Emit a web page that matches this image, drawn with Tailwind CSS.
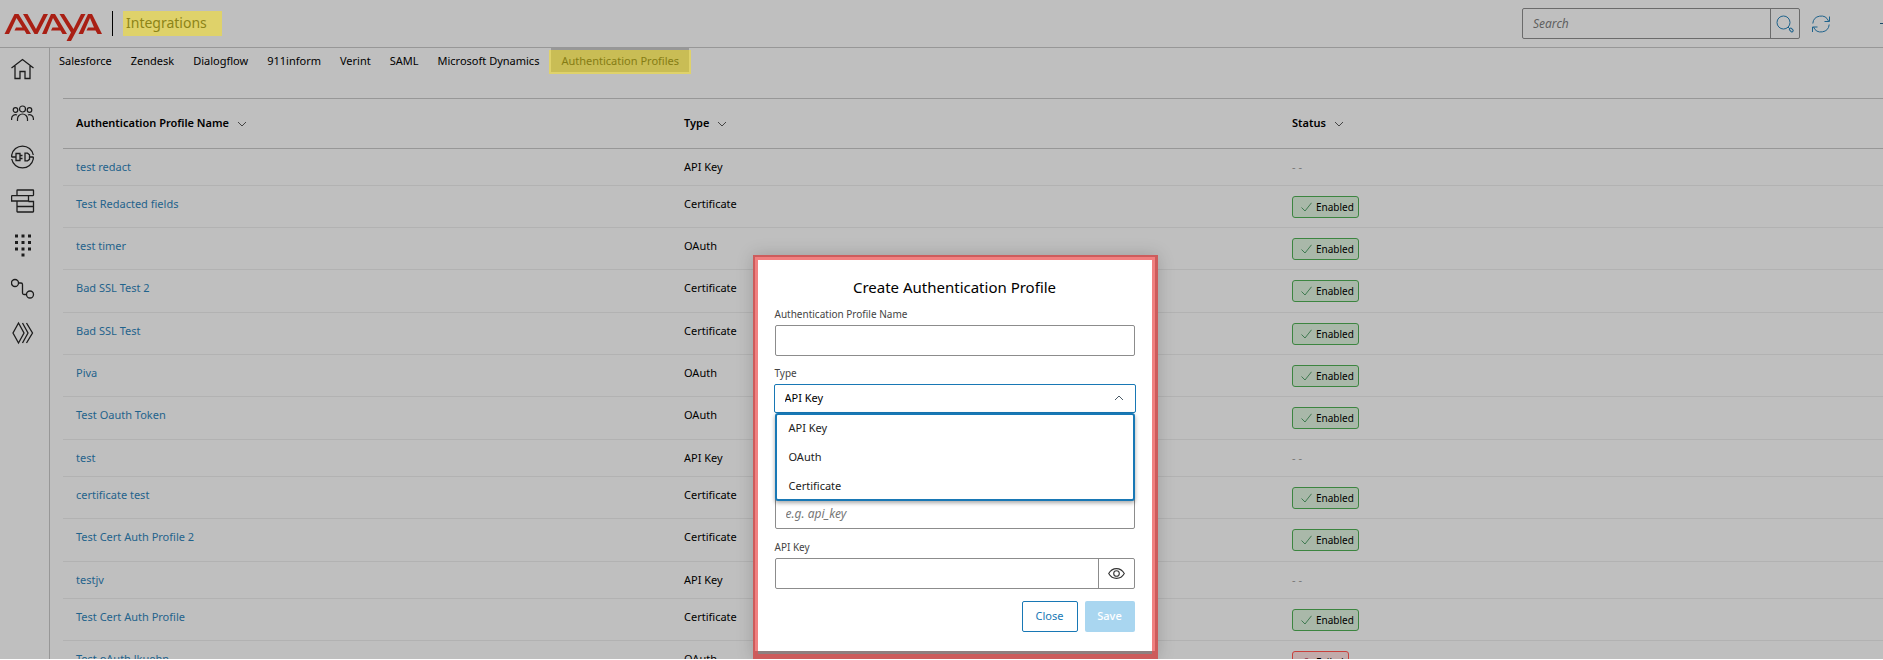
<!DOCTYPE html>
<html lang="en">
<head>
<meta charset="utf-8">
<title>Integrations</title>
<script src="https://cdn.jsdelivr.net/npm/@tailwindcss/browser@4"></script>
</head>
<body class="h-screen overflow-hidden border-b border-white bg-white font-['Noto_Sans',sans-serif] text-[11px] text-black">
<svg class="hidden">
  <symbol id="chev" viewBox="0 0 10 6"><path d="M1 1l4 4 4-4" fill="none" stroke="currentColor"/></symbol>
  <symbol id="check" viewBox="0 0 11 10"><path d="M.5 5.5L4 9 10.500 .8" fill="none" stroke="currentColor"/></symbol>
</svg>
<div class="relative flex h-full flex-col overflow-hidden bg-[#bfbfbf]">
  <header class="flex h-12 shrink-0 items-center border-b border-[#979797] pl-1">
    <svg class="h-9 w-[98px] shrink-0" viewBox="0 0 98 36" fill="#a91f14" aria-label="Avaya">
      <path d="M.5 28L10.500 8h4L27 28h-4.500l-2-3.500H10.500l1.500-3h6.500L12.500 12 5 28z"/>
      <path d="M19 8h4.500l8.500 15 7.500-15H44L33.500 28h-3z"/>
      <path d="M38 28L47 8h4L63 28h-4.500l-2-3.500H47l1.500-3h6L49 12l-6.500 16z"/>
      <path d="M55.500 8H60l9.500 15L77 8h4.500L67 35h-4.500l4.500-8.500z"/>
      <path d="M74.500 28L84 8h4l10 20h-4.500l-2-3.500H82.500l1.500-3h6L86 12l-7 16z"/>
    </svg>
    <div class="ml-[10px] h-[25px] w-px bg-black"></div>
    <h1 class="ml-[10px] h-[25px] w-[99px] bg-[#dfd26a] pl-[3px] text-[14px] leading-6 text-[#8d8417]">Integrations</h1>
    <form class="mr-3 ml-auto flex h-[31px] w-[278px] rounded-xs border border-[#6b6b6b]">
      <input type="text" aria-label="Search" placeholder="Search" class="min-w-0 flex-1 pl-[10px] text-xs placeholder:text-[#5f5f5f] placeholder:italic">
      <button type="button" aria-label="Submit search" class="flex w-[29px] items-center justify-center border-l border-[#6b6b6b] text-[#1f638c]">
        <svg class="size-[18px]" viewBox="0 0 18 18" fill="none" stroke="currentColor"><circle cx="7.500" cy="7.500" r="6.500"/><path d="M12 12l2 2"/><rect x="13.300" y="13.800" width="4" height="2.400" rx="1" transform="rotate(45 15.300 15)"/></svg>
      </button>
    </form>
    <button type="button" aria-label="Refresh" class="text-[#1f638c]">
      <svg class="size-[18px]" viewBox="0 0 18 18" fill="none" stroke="currentColor"><path d="M.8 8.500A8.200 8.200 0 0 1 16.500 6M17.200 9.500A8.200 8.200 0 0 1 1.500 12M17.500 1.500v5h-5M.5 17v-5h5"/></svg>
    </button>
    <div class="ml-[50px] h-px w-[3px] bg-[#1a4a68]"></div>
  </header>
  <div class="flex min-h-0 flex-1">
    <nav aria-label="Main" class="flex w-[50px] shrink-0 flex-col gap-5 border-r border-[#979797] pt-[9px] pl-[11px] text-[#1c1c1c]">
      <a href="#" aria-label="Home"><svg class="size-6" viewBox="0 0 24 24" fill="none" stroke="currentColor" stroke-width="1.300"><path d="M.5 11L11.500 2.500 22.500 11M4 9v12.500h5V14.500h5v7h5V9"/></svg></a>
      <a href="#" aria-label="Users"><svg class="size-6" viewBox="0 0 24 24" fill="none" stroke="currentColor" stroke-width="1.200"><circle cx="11.500" cy="8" r="3"/><circle cx="4.500" cy="9" r="2.300"/><circle cx="18.500" cy="9" r="2.300"/><path d="M6.500 20v-2a5 5 0 0 1 10 0v2M.6 19v-1.500a4 4 0 0 1 5.500-3.500M22.400 19v-1.500a4 4 0 0 0-5.500-3.500"/></svg></a>
      <a href="#" aria-label="Integrations"><svg class="size-6" viewBox="0 0 24 24" fill="none" stroke="currentColor" stroke-width="1.300"><path d="M.7 10a11 11 0 0 1 21.600 0M.7 14a11 11 0 0 0 21.600 0M.5 12H5M18 12h4.500M.7 10v2M22.300 12v2M5 8.500h4v7H5zM9 10.500h2.500M9 13.500h2.500M14 8.200v7.600h2.500l2-1.500v-4.600l-2-1.500z"/></svg></a>
      <a href="#" aria-label="Queues"><svg class="size-6" viewBox="0 0 24 24" fill="none" stroke="currentColor" stroke-width="1.300"><path d="M6 6.500v-5q0-.5.500-.5h15.500q.5 0 .5.500v4.500q0 .5-.5.500M.6 6.600h21.400M.6 6.600v5.400h16.900V6.600M6 12v10.500q0 .5.500.5h15.500q.5 0 .5-.5V12.500h-5M6 17.500h16.500"/></svg></a>
      <a href="#" aria-label="Dialpad"><svg class="size-6" viewBox="0 0 24 24" fill="currentColor"><path d="M4 1.500h3v3H4zM10.500 1.500h3v3h-3zM17 1.500h3v3h-3zM4 8h3v3H4zM10.500 8h3v3h-3zM17 8h3v3h-3zM4 14.500h3v3H4zM10.500 14.500h3v3h-3zM17 14.500h3v3h-3zM10.500 20.500h3v3h-3z"/></svg></a>
      <a href="#" aria-label="Routing"><svg class="size-6" viewBox="0 0 24 24" fill="none" stroke="currentColor" stroke-width="1.300"><circle cx="4" cy="6" r="3.500"/><circle cx="19" cy="17.500" r="3.500"/><path d="M7.500 6h2.500q1.500 0 1.500 1.500v8.500q0 1.500 1.500 1.500h2.500"/></svg></a>
      <a href="#" aria-label="Flows"><svg class="size-6" viewBox="0 0 24 24" fill="none" stroke="currentColor" stroke-width="1.300"><path d="M7.500 2L2 12l5.500 10L13 12zM11.500 2L17 12l-5.500 10M15.500 2l6 10-6 10"/></svg></a>
    </nav>
    <main class="min-w-0 flex-1">
      <nav aria-label="Integrations" class="flex h-[50px] items-start gap-px leading-[26px]">
        <a href="#" class="px-[9px]">Salesforce</a><a href="#" class="px-[9px]">Zendesk</a><a href="#" class="px-[9px]">Dialogflow</a><a href="#" class="px-[9px]">911inform</a><a href="#" class="px-[9px]">Verint</a><a href="#" class="px-[9px]">SAML</a><a href="#" class="px-[9px]">Microsoft Dynamics</a>
        <a href="#" aria-current="page" class="relative ml-0.5 h-6 border-t-2 border-[#979797] bg-[#c9bd55] px-[10px] leading-[22px] text-[#857c14] before:absolute before:inset-x-[-2px] before:top-0 before:-bottom-0.5 before:border-x-2 before:border-b-2 before:border-[#dfd26a]">Authentication Profiles</a>
      </nav>
      <table class="ml-[13px] w-[calc(100%-13px)] table-fixed border-collapse">
        <colgroup><col class="w-[608px]"><col class="w-[608px]"><col></colgroup>
        <thead><tr class="h-[50px] border-y border-[#979797] text-left [&>th]:pl-[13px] [&>th]:font-semibold [&_svg]:ml-2 [&_svg]:inline [&_svg]:h-[6px] [&_svg]:w-[10px] [&_svg]:text-[#444]">
          <th>Authentication Profile Name<svg><use href="#chev"/></svg></th><th>Type<svg><use href="#chev"/></svg></th><th>Status<svg><use href="#chev"/></svg></th></tr></thead>
        <tbody class="[&>tr]:border-b [&>tr]:border-[#b2b2b2] [&_td]:pt-[10px] [&_td]:pl-[13px] [&_td]:align-top [&_td]:leading-4 [&_a]:text-[#1f638c] [&_span]:flex [&_span]:h-[22px] [&_span]:w-[67px] [&_span]:items-center [&_span]:gap-1 [&_span]:rounded-[3px] [&_span]:border [&_span]:border-[#3c8540] [&_span]:bg-[#a9b8a9] [&_span]:pl-2 [&_span]:text-[10px] [&_svg]:h-[10px] [&_svg]:w-[11px] [&_svg]:text-[#3f7a50]">
          <tr class="h-[37px]"><td><a href="#">test redact</a></td><td>API Key</td><td class="text-[#777]">- -</td></tr>
          <tr class="h-[42px]"><td><a href="#">Test Redacted fields</a></td><td>Certificate</td><td><span><svg><use href="#check"/></svg>Enabled</span></td></tr>
          <tr class="h-[42px]"><td><a href="#">test timer</a></td><td>OAuth</td><td><span><svg><use href="#check"/></svg>Enabled</span></td></tr>
          <tr class="h-[43px]"><td><a href="#">Bad SSL Test 2</a></td><td>Certificate</td><td><span><svg><use href="#check"/></svg>Enabled</span></td></tr>
          <tr class="h-[42px]"><td><a href="#">Bad SSL Test</a></td><td>Certificate</td><td><span><svg><use href="#check"/></svg>Enabled</span></td></tr>
          <tr class="h-[42px]"><td><a href="#">Piva</a></td><td>OAuth</td><td><span><svg><use href="#check"/></svg>Enabled</span></td></tr>
          <tr class="h-[43px]"><td><a href="#">Test Oauth Token</a></td><td>OAuth</td><td><span><svg><use href="#check"/></svg>Enabled</span></td></tr>
          <tr class="h-[37px]"><td><a href="#">test</a></td><td>API Key</td><td class="text-[#777]">- -</td></tr>
          <tr class="h-[42px]"><td><a href="#">certificate test</a></td><td>Certificate</td><td><span><svg><use href="#check"/></svg>Enabled</span></td></tr>
          <tr class="h-[43px]"><td><a href="#">Test Cert Auth Profile 2</a></td><td>Certificate</td><td><span><svg><use href="#check"/></svg>Enabled</span></td></tr>
          <tr class="h-[37px]"><td><a href="#">testjv</a></td><td>API Key</td><td class="text-[#777]">- -</td></tr>
          <tr class="h-[42px]"><td><a href="#">Test Cert Auth Profile</a></td><td>Certificate</td><td><span><svg><use href="#check"/></svg>Enabled</span></td></tr>
          <tr class="h-[42px]"><td><a href="#">Test oAuth lkuehn</a></td><td>OAuth</td><td><div class="flex h-[22px] w-[57px] items-center gap-1 rounded-[3px] border border-[#c9403c] bg-[#c2abab] pl-2 text-[10px]"><svg viewBox="0 0 11 10" fill="none" stroke="#8c2a3c"><path d="M2 8.500h7L8 7V4a2.500 2.500 0 0 0-5 0v3z"/></svg>Failed</div></td></tr>
        </tbody>
      </table>
    </main>
  </div>
  <div class="absolute inset-0 flex items-end justify-center overflow-hidden pl-[27px]">
    <div class="bg-[#cd5c5c] p-[2px] pr-[3px] shadow-[0_0_16px_rgba(0,0,0,0.18)]">
    <div class="bg-[#f08080] px-[3px] pt-[3px]">
    <section role="dialog" aria-labelledby="dlg" class="mb-[6px] h-[391px] w-[394px] bg-white px-[17px] pt-[15px] shadow-[0_3px_0_#8f7f7f,0_6px_0_#cd5c5c]">
      <h2 id="dlg" class="text-center text-[15px] leading-6">Create Authentication Profile</h2>
      <label for="name" class="mt-2 block text-[10px] leading-[14px] text-[#444]">Authentication Profile Name</label>
      <input id="name" type="text" class="mt-1 block h-[31px] w-full rounded-xs border border-[#8c8c8c] px-[10px]">
      <label for="type" class="mt-[10px] block text-[10px] leading-[14px] text-[#444]">Type</label>
      <div class="relative -mx-px mt-1">
        <select id="type" class="block h-[29px] w-full appearance-none rounded-xs border border-[#1878b5] pl-[10px]"><option>API Key</option><option>OAuth</option><option>Certificate</option></select>
        <svg class="pointer-events-none absolute top-[11px] right-3 h-[6px] w-[10px] rotate-180 text-[#4a5a66]"><use href="#chev"/></svg>
        <ul role="listbox" aria-label="Type" class="absolute inset-x-px top-[29px] flex flex-col gap-[3px] rounded-[3px] border-2 border-[#1878b5] bg-white leading-[26px] text-[#222] shadow-[0_2px_4px_rgba(0,0,0,0.35)] [&>li]:pl-3"><li role="option">API Key</li><li role="option">OAuth</li><li role="option">Certificate</li></ul>
      </div>
      <input type="text" aria-label="Key name" placeholder="e.g. api_key" class="mt-[85px] block h-[31px] w-full rounded-xs border border-[#8c8c8c] px-[10px] text-xs placeholder:text-[#777] placeholder:italic">
      <label for="key" class="mt-[11px] block text-[10px] leading-[14px] text-[#444]">API Key</label>
      <div class="mt-1 flex h-[31px] rounded-xs border border-[#8c8c8c]">
        <input id="key" type="password" class="min-w-0 flex-1 px-[10px]">
        <button type="button" aria-label="Show key" class="flex w-9 items-center justify-center border-l border-[#8c8c8c]"><svg class="h-[11px] w-[17px]" viewBox="0 0 17 11" fill="none" stroke="#333" stroke-width="1.100"><path d="M.7 5.500Q3.500.6 8.500.6t7.800 4.900Q13.500 10.400 8.500 10.400T.7 5.500z"/><circle cx="8.500" cy="5.500" r="2.800"/></svg></button>
      </div>
      <div class="mt-3 flex justify-end gap-[7px]">
        <button type="button" class="h-[31px] w-14 rounded-xs border border-[#1878b5] text-[#1878b5]">Close</button>
        <button type="button" disabled class="h-[31px] w-[50px] rounded-xs bg-[#a9d6f0] font-medium text-white">Save</button>
      </div>
    </section>
    </div>
    </div>
  </div>
</div>
</body>
</html>
